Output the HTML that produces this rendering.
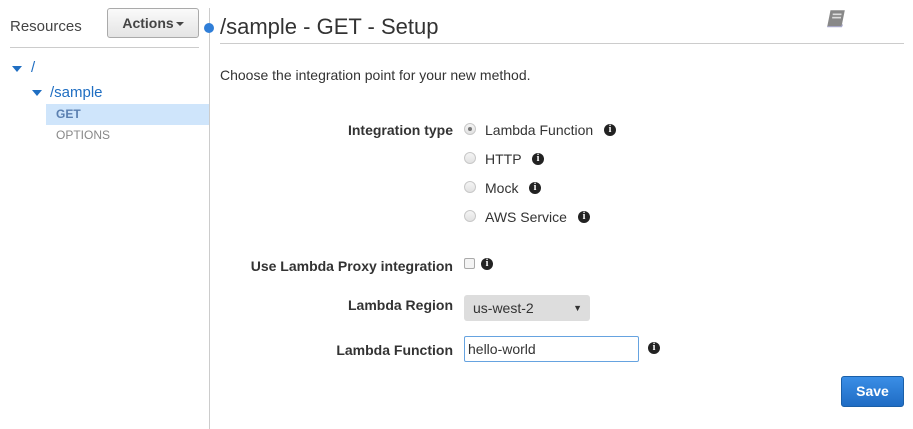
<!DOCTYPE html>
<html><head><meta charset="utf-8"><style>
*{margin:0;padding:0;box-sizing:border-box}
body{width:913px;height:429px;background:#fff;font-family:"Liberation Sans",Arial,sans-serif;position:relative;overflow:hidden;color:#333}
.a{position:absolute;white-space:nowrap}
.lbl{position:absolute;right:460px;font-weight:bold;font-size:14px;color:#333;white-space:nowrap}
.radio{position:absolute;left:464px;width:12px;height:12px;border-radius:50%;border:1px solid #c8c8c8;background:linear-gradient(#f4f4f4,#e2e2e2)}
.opt{position:absolute;left:485px;font-size:14px;color:#333}
.info{position:absolute;width:12px;height:12px;border-radius:50%;background:#222;color:#fff;font:bold 10px/12px "Liberation Serif",serif;text-align:center}
.tri{position:absolute;width:0;height:0;border-left:5px solid transparent;border-right:5px solid transparent;border-top:6px solid #1f6ec2}
</style></head><body>
<div class="a" style="left:10px;top:18px;font-size:15px;color:#444">Resources</div>
<div class="a" style="left:107px;top:8px;width:92px;height:30px;border:1px solid #aaa;border-radius:3px;background:linear-gradient(#fafafa,#e4e4e4);font-weight:bold;font-size:14px;color:#444;text-align:center;line-height:28px">Actions<span style="display:inline-block;width:0;height:0;border-left:4px solid transparent;border-right:4px solid transparent;border-top:4px solid #444;vertical-align:middle;margin-left:2px"></span></div>
<div class="a" style="left:10px;top:47px;width:189px;height:1px;background:#ccc"></div>
<div class="a" style="left:209px;top:8px;width:1px;height:421px;background:#ccc"></div>
<div class="a" style="left:204px;top:23px;width:10px;height:10px;border-radius:50%;background:#2f7ed8"></div>
<div class="tri" style="left:12px;top:66px"></div>
<div class="a" style="left:31px;top:59px;font-size:15px;color:#1f6ec2">/</div>
<div class="tri" style="left:32px;top:90px"></div>
<div class="a" style="left:50px;top:84px;font-size:15px;color:#1f6ec2">/sample</div>
<div class="a" style="left:46px;top:104px;width:163px;height:21px;background:#cfe5fb"></div>
<div class="a" style="left:56px;top:107px;font-size:12px;font-weight:bold;color:#5a7fb0">GET</div>
<div class="a" style="left:56px;top:128px;font-size:12px;color:#888">OPTIONS</div>
<div class="a" style="left:220px;top:14px;font-size:22px;color:#333">/sample - GET - Setup</div>
<div class="a" style="left:220px;top:43px;width:684px;height:1px;background:#ccc"></div>
<svg class="a" style="left:825px;top:8px" width="22" height="22" viewBox="0 0 20 20"><path d="M5 2h13l-3 15H2z" fill="#888"/><path d="M2 17h13l1-2" stroke="#aac" fill="none"/><rect x="7" y="5" width="8" height="1.5" fill="#ddd"/><rect x="6.5" y="8" width="8" height="1.5" fill="#ddd"/></svg>
<div class="a" style="left:220px;top:67px;font-size:14px">Choose the integration point for your new method.</div>
<div class="lbl" style="top:122px">Integration type</div>
<div class="radio" style="top:123px"><div style="position:absolute;left:3px;top:3px;width:4px;height:4px;border-radius:50%;background:#777"></div></div>
<div class="opt" style="top:122px">Lambda Function</div><div class="info" style="left:604px;top:124px">i</div>
<div class="radio" style="top:152px"></div><div class="opt" style="top:151px">HTTP</div><div class="info" style="left:532px;top:153px">i</div>
<div class="radio" style="top:181px"></div><div class="opt" style="top:180px">Mock</div><div class="info" style="left:529px;top:182px">i</div>
<div class="radio" style="top:210px"></div><div class="opt" style="top:209px">AWS Service</div><div class="info" style="left:578px;top:211px">i</div>
<div class="lbl" style="top:258px">Use Lambda Proxy integration</div>
<div class="a" style="left:464px;top:258px;width:11px;height:11px;border:1px solid #aaa;border-radius:2px;background:#f4f4f4"></div>
<div class="info" style="left:481px;top:258px">i</div>
<div class="lbl" style="top:297px">Lambda Region</div>
<div class="a" style="left:464px;top:295px;width:126px;height:26px;background:#ddd;border-radius:3px;font-size:14px;line-height:26px;padding-left:9px">us-west-2<span style="position:absolute;right:8px;font-size:9px">▼</span></div>
<div class="lbl" style="top:342px">Lambda Function</div>
<div class="a" style="left:464px;top:336px;width:175px;height:26px;border:1px solid #66a3e0;border-radius:2px;font-size:14px;line-height:24px;padding-left:3px">hello-world</div>
<div class="info" style="left:648px;top:342px">i</div>
<div class="a" style="left:841px;top:376px;width:63px;height:31px;border:1px solid #1a5fa8;border-radius:3px;background:linear-gradient(#3a8ee6,#1f6cc4);color:#fff;font-weight:bold;font-size:14px;text-align:center;line-height:29px">Save</div>
</body></html>
